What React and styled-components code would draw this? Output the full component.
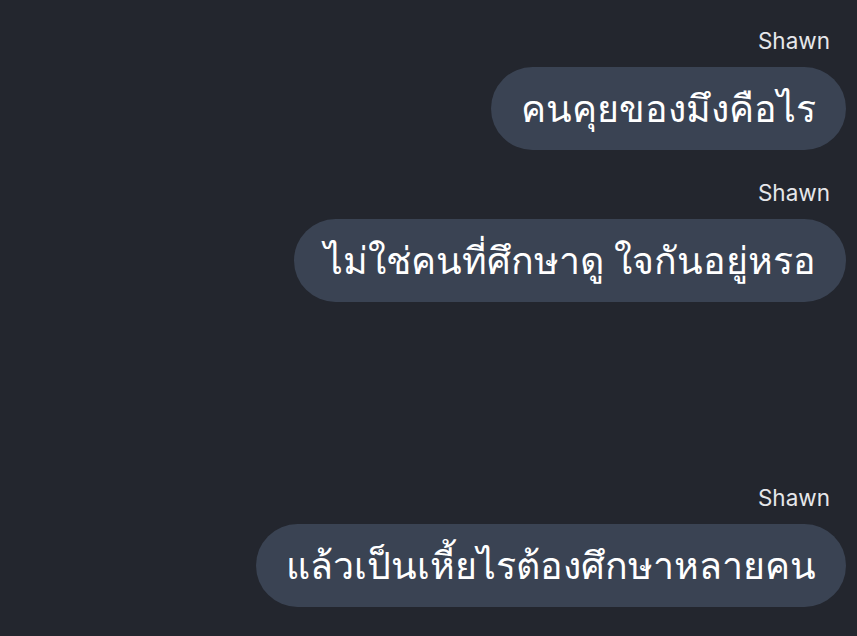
import styled, { createGlobalStyle } from "styled-components";

const GlobalStyle = createGlobalStyle`
  html, body {
    margin: 0;
    padding: 0;
    background: #23262e;
  }
  body {
    font-family: "Noto Sans", "DejaVu Sans", sans-serif;
  }
`;

const messages = [
  { name: "Shawn", text: "คนคุยของมึงคือไร", gap: 0 },
  { name: "Shawn", text: "ไม่ใช่คนที่ศึกษาดู ใจกันอยู่หรอ", gap: 31 },
  { name: "Shawn", text: "แล้วเป็นเหี้ยไรต้องศึกษาหลายคน", gap: 184 },
];

export default function App() {
  return (
    <>
      <GlobalStyle />
      <ChatScreen>
        {messages.map((m, i) => (
          <MessageGroup key={i} $gap={m.gap}>
            <SenderName>{m.name}</SenderName>
            <Bubble>{m.text}</Bubble>
          </MessageGroup>
        ))}
      </ChatScreen>
    </>
  );
}

const ChatScreen = styled.div`
  width: 857px;
  height: 636px;
  box-sizing: border-box;
  padding: 29px 11px 0 0;
  display: flex;
  flex-direction: column;
  align-items: flex-end;
  background: #23262e;
  overflow: hidden;
`;

const MessageGroup = styled.div`
  display: flex;
  flex-direction: column;
  align-items: flex-end;
  gap: 14px;
  margin-top: ${(p) => p.$gap}px;
`;

const SenderName = styled.div`
  font-family: "Inter", "Liberation Sans", sans-serif;
  font-size: 22.5px;
  line-height: 24px;
  color: #e6e7ea;
  padding-right: 16px;
`;

const Bubble = styled.div`
  height: 83px;
  box-sizing: border-box;
  padding: 0 30px;
  display: flex;
  align-items: center;
  border-radius: 42px;
  background: #3a4353;
  color: #ffffff;
  font-size: 37.5px;
  white-space: nowrap;
`;
